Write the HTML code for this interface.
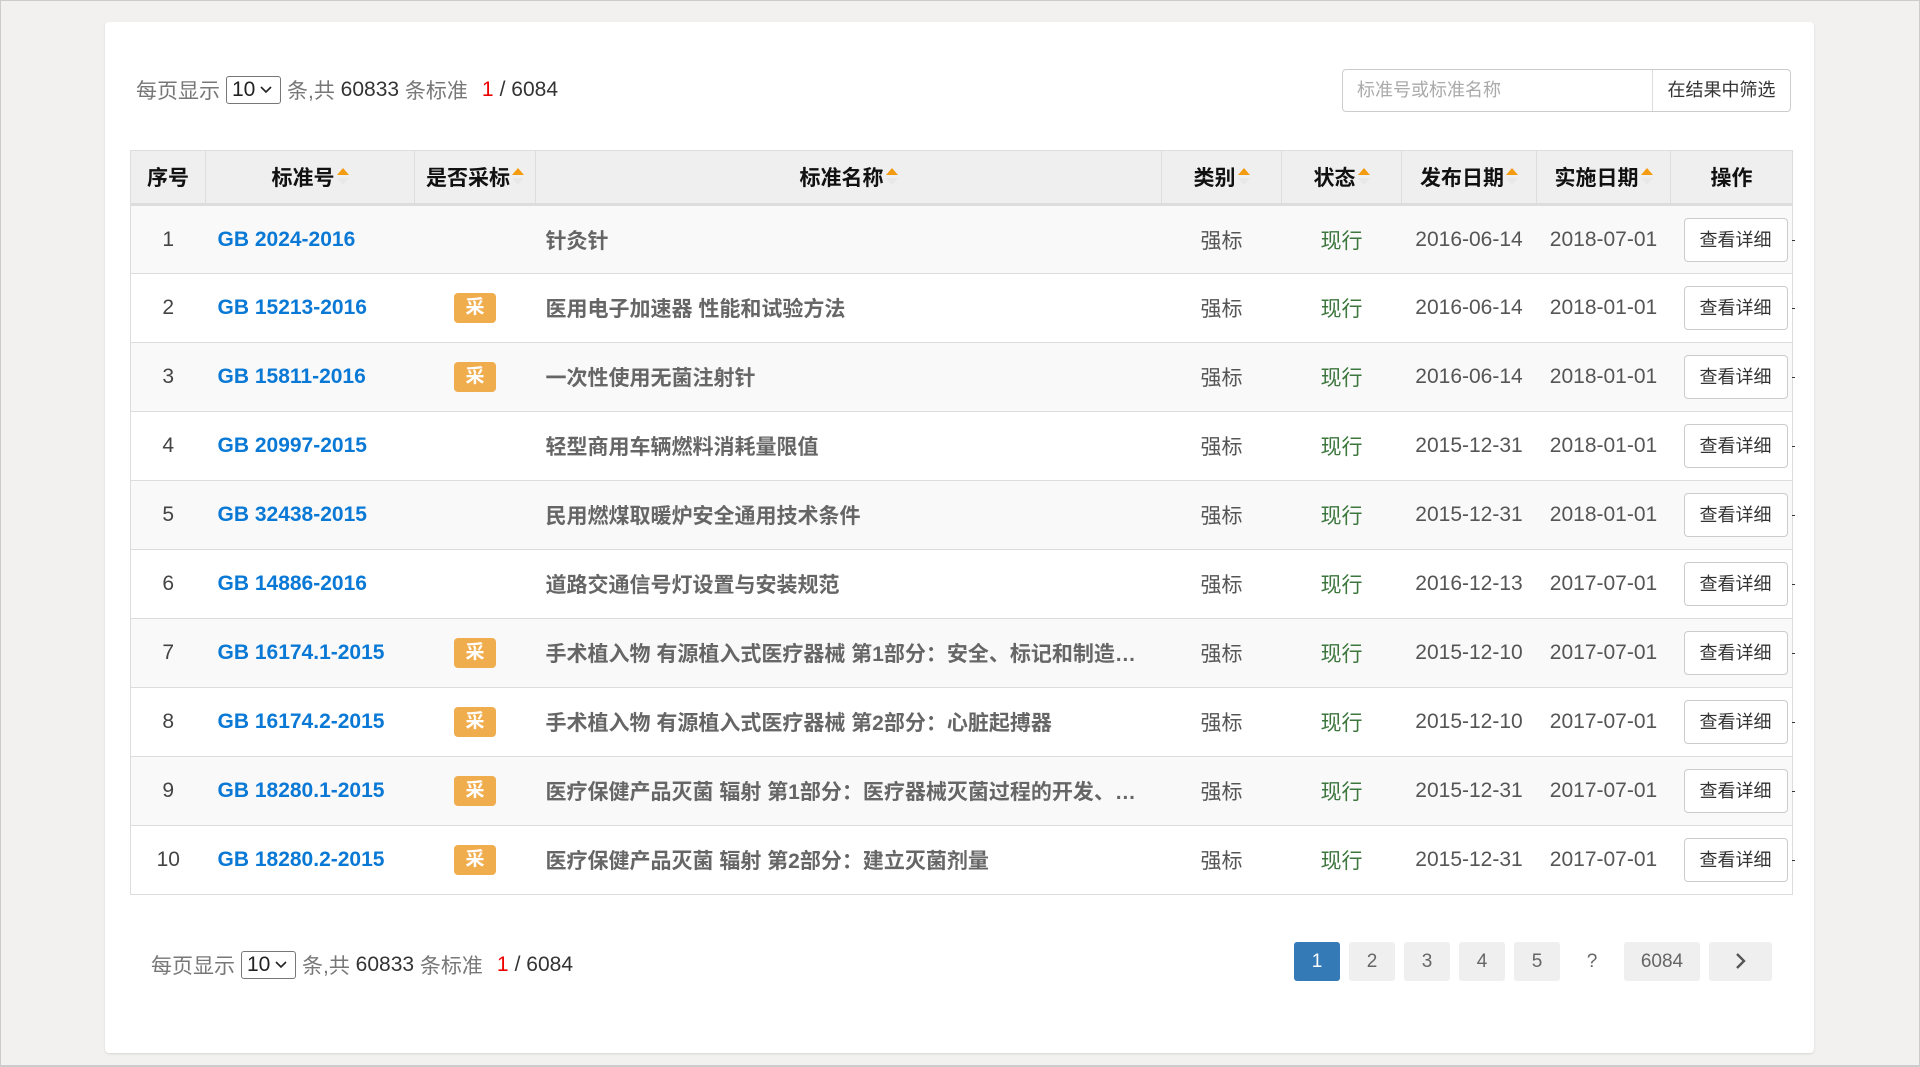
<!DOCTYPE html>
<html><head><meta charset="utf-8">
<style>
*{box-sizing:border-box;margin:0;padding:0}
body{width:1920px;height:1067px;background:#f2f1f0;font-family:"Liberation Sans","Noto Sans CJK SC",sans-serif;position:relative;overflow:hidden}
.frame{position:absolute;left:0;top:0;width:1920px;height:1067px;border:1px solid #ccc;border-bottom:2px solid #ccc;pointer-events:none}
.card{position:absolute;left:105px;top:22px;width:1709px;height:1031px;background:#fff;border-radius:4px;box-shadow:0 1px 2px rgba(0,0,0,.12)}
.info{position:absolute;font-size:21px;color:#777;white-space:nowrap;display:flex;align-items:center}
.info b{font-weight:normal;color:#333}
.info .r{color:#e00;margin:0 6px 0 14px}
.sel{display:inline-flex;align-items:center;border:1px solid #777;border-radius:3px;height:28px;width:55px;padding:0 5px;color:#222;margin:0 6px;font-size:21px}
.sel svg{margin-left:5px}
.search{position:absolute;left:1342px;top:69px;width:449px;height:43px;border:1px solid #ccc;border-radius:4px;display:flex;font-size:18px}
.search .in{width:310px;border-right:1px solid #ddd;color:#aaa;padding:0 14px;line-height:41px}
.search .bt{flex:1;color:#333;text-align:center;line-height:41px}
table{position:absolute;left:130px;top:150px;width:1662px;border-collapse:collapse;table-layout:fixed;font-size:21px}
th{height:54px;background:#efefef;border:1px solid #ddd;border-bottom:3px solid #ddd;font-weight:bold;color:#111;text-align:center}
td{height:69px;border-top:1px solid #ddd;text-align:center;color:#555;white-space:nowrap;overflow:hidden}
tbody tr:nth-child(odd) td{background:#f9f9f9}
tbody tr:last-child td{border-bottom:1px solid #ddd}
tbody tr td:first-child{border-left:1px solid #ddd}
tbody tr td:last-child{border-right:1px solid #ddd}
.ar{display:inline-block;width:12px;height:20px;position:relative;vertical-align:-2px;margin-left:2px}
.ar:before{content:"";position:absolute;left:0;top:1px;border:6px solid transparent;border-bottom:7px solid #f39c12;border-top:0}
.ar:after{content:"";position:absolute;left:0;top:11px;border:6px solid transparent;border-top:7px solid #e8e8e8;border-bottom:0}
td.no{color:#444}
td.code{text-align:left;padding-left:12px;color:#0a79d6;font-weight:bold}
td.title{text-align:left;padding-left:10px;color:#666;font-weight:bold;text-overflow:ellipsis}
.bd{display:inline-block;width:42px;height:30px;line-height:30px;background:#f0ad4e;color:#fff;border-radius:4px;font-weight:bold;font-size:19px}
.g{color:#3c763d}
.btn{display:inline-block;width:104px;height:44px;line-height:42px;border:1px solid #ccc;border-radius:4px;background:#fff;color:#333;font-size:18px;margin-left:13px;text-align:center}
td.op{overflow:visible;text-align:left;position:relative}
td.op:after{content:"";position:absolute;right:-3px;top:34px;width:3px;height:1px;background:#333}
.pg{position:absolute;top:942px;height:39px;line-height:39px;background:#f0efef;color:#666;text-align:center;font-size:19px;border-radius:3px}
</style></head><body>
<div class="card"></div>
<div class="info" style="left:136px;top:75px">每页显示<span class="sel">10<svg width="12" height="8"><path d="M1 1l5 5 5-5" stroke="#222" stroke-width="1.6" fill="none"/></svg></span>条,共&nbsp;<b>60833</b>&nbsp;条标准<span class="r">1</span><b>/ 6084</b></div>
<div class="search"><div class="in">标准号或标准名称</div><div class="bt">在结果中筛选</div></div>
<table>
<colgroup><col style="width:75px"><col style="width:209px"><col style="width:121px"><col style="width:626px"><col style="width:120px"><col style="width:120px"><col style="width:135px"><col style="width:134px"><col style="width:122px"></colgroup>
<thead><tr><th>序号</th><th>标准号<i class="ar"></i></th><th>是否采标<i class="ar"></i></th><th>标准名称<i class="ar"></i></th><th>类别<i class="ar"></i></th><th>状态<i class="ar"></i></th><th>发布日期<i class="ar"></i></th><th>实施日期<i class="ar"></i></th><th>操作</th></tr></thead>
<tbody>
<tr><td class="no">1</td><td class="code">GB 2024-2016</td><td></td><td class="title">针灸针</td><td>强标</td><td class="g">现行</td><td>2016-06-14</td><td>2018-07-01</td><td class="op"><span class="btn">查看详细</span></td></tr>
<tr><td class="no">2</td><td class="code">GB 15213-2016</td><td><span class="bd">采</span></td><td class="title">医用电子加速器 性能和试验方法</td><td>强标</td><td class="g">现行</td><td>2016-06-14</td><td>2018-01-01</td><td class="op"><span class="btn">查看详细</span></td></tr>
<tr><td class="no">3</td><td class="code">GB 15811-2016</td><td><span class="bd">采</span></td><td class="title">一次性使用无菌注射针</td><td>强标</td><td class="g">现行</td><td>2016-06-14</td><td>2018-01-01</td><td class="op"><span class="btn">查看详细</span></td></tr>
<tr><td class="no">4</td><td class="code">GB 20997-2015</td><td></td><td class="title">轻型商用车辆燃料消耗量限值</td><td>强标</td><td class="g">现行</td><td>2015-12-31</td><td>2018-01-01</td><td class="op"><span class="btn">查看详细</span></td></tr>
<tr><td class="no">5</td><td class="code">GB 32438-2015</td><td></td><td class="title">民用燃煤取暖炉安全通用技术条件</td><td>强标</td><td class="g">现行</td><td>2015-12-31</td><td>2018-01-01</td><td class="op"><span class="btn">查看详细</span></td></tr>
<tr><td class="no">6</td><td class="code">GB 14886-2016</td><td></td><td class="title">道路交通信号灯设置与安装规范</td><td>强标</td><td class="g">现行</td><td>2016-12-13</td><td>2017-07-01</td><td class="op"><span class="btn">查看详细</span></td></tr>
<tr><td class="no">7</td><td class="code">GB 16174.1-2015</td><td><span class="bd">采</span></td><td class="title">手术植入物 有源植入式医疗器械 第1部分：安全、标记和制造…</td><td>强标</td><td class="g">现行</td><td>2015-12-10</td><td>2017-07-01</td><td class="op"><span class="btn">查看详细</span></td></tr>
<tr><td class="no">8</td><td class="code">GB 16174.2-2015</td><td><span class="bd">采</span></td><td class="title">手术植入物 有源植入式医疗器械 第2部分：心脏起搏器</td><td>强标</td><td class="g">现行</td><td>2015-12-10</td><td>2017-07-01</td><td class="op"><span class="btn">查看详细</span></td></tr>
<tr><td class="no">9</td><td class="code">GB 18280.1-2015</td><td><span class="bd">采</span></td><td class="title">医疗保健产品灭菌 辐射 第1部分：医疗器械灭菌过程的开发、…</td><td>强标</td><td class="g">现行</td><td>2015-12-31</td><td>2017-07-01</td><td class="op"><span class="btn">查看详细</span></td></tr>
<tr><td class="no">10</td><td class="code">GB 18280.2-2015</td><td><span class="bd">采</span></td><td class="title">医疗保健产品灭菌 辐射 第2部分：建立灭菌剂量</td><td>强标</td><td class="g">现行</td><td>2015-12-31</td><td>2017-07-01</td><td class="op"><span class="btn">查看详细</span></td></tr>
</tbody></table>
<div class="info" style="left:151px;top:950px">每页显示<span class="sel">10<svg width="12" height="8"><path d="M1 1l5 5 5-5" stroke="#222" stroke-width="1.6" fill="none"/></svg></span>条,共&nbsp;<b>60833</b>&nbsp;条标准<span class="r">1</span><b>/ 6084</b></div>
<div class="pg" style="left:1294px;width:46px;background:#337ab7;color:#fff">1</div>
<div class="pg" style="left:1349px;width:46px">2</div>
<div class="pg" style="left:1404px;width:46px">3</div>
<div class="pg" style="left:1459px;width:46px">4</div>
<div class="pg" style="left:1514px;width:46px">5</div>
<div class="pg" style="left:1569px;width:46px;background:none">?</div>
<div class="pg" style="left:1624px;width:76px">6084</div>
<div class="pg" style="left:1709px;width:63px"><svg width="12" height="18" style="vertical-align:-3px"><path d="M2 2l7 7-7 7" stroke="#555" stroke-width="2.4" fill="none"/></svg></div>
<div class="frame"></div>
</body></html>
